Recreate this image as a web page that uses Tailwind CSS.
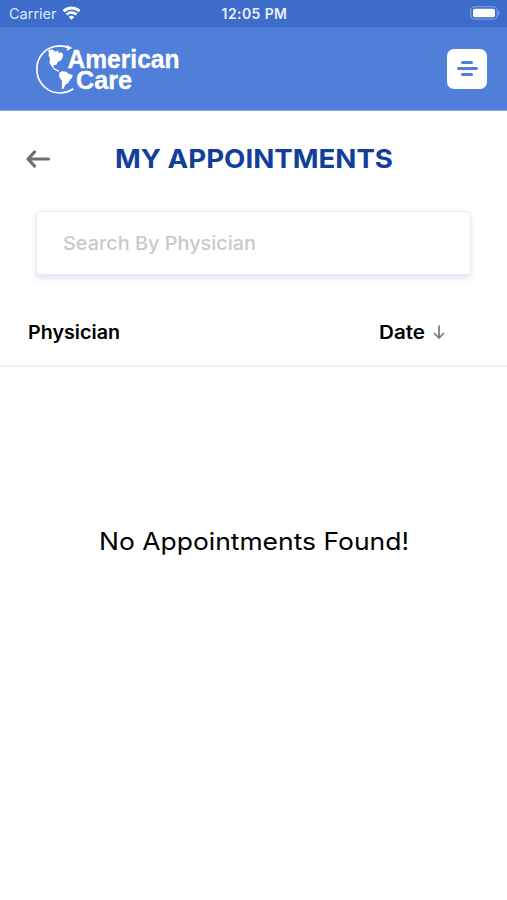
<!DOCTYPE html>
<html lang="en">
<head>
    <meta charset="UTF-8">
    <title>My Appointments</title>
    <script src="https://cdn.jsdelivr.net/npm/@tailwindcss/browser@4"></script>
</head>
<body class="bg-white font-['Inter',sans-serif] text-black">
    <div class="h-[900px] flex flex-col overflow-hidden">
        <!-- Status bar -->
        <div class="h-[27px] shrink-0 bg-[#3d6ccb] grid grid-cols-3 items-center pl-[9px] pr-[7px] text-white">
            <div class="flex items-center gap-[5px]">
                <span class="text-[14.5px] leading-[27px] text-[#dfe8fb]">Carrier</span>
                <svg class="w-[19px] h-[14px] -mt-[2px]" viewBox="0 0 18 14" fill="none" stroke="currentColor" stroke-width="2.8">
                    <path d="M1 5.2C5.5.9 12.500.9 17 5.200"></path>
                    <path d="M4 8.500c2.900-2.600 7.100-2.600 10 0"></path>
                    <path d="M9 13.800l-2.800-2.900c1.500-1.400 4.100-1.400 5.600 0z" fill="currentColor" stroke="none"></path>
                </svg>
            </div>
            <span class="text-center text-[14px] leading-[27px] font-semibold tracking-[0.4px] text-[#eaf0fd] whitespace-nowrap">12:05 PM</span>
            <svg class="justify-self-end w-[30px] h-[14px] -mt-[1px]" viewBox="0 0 30 14">
                <rect x=".75" y=".75" width="26.500" height="12.500" rx="4" fill="none" stroke="#7f9fe2" stroke-width="1.200"></rect>
                <rect x="3" y="2.700" width="22" height="8.600" rx="2" fill="#fff"></rect>
                <path d="M28.300 4.500c2 .8 2 4.200 0 5z" fill="#7f9fe2"></path>
            </svg>
        </div>

        <!-- Header -->
        <div class="h-[84px] shrink-0 bg-[#507fda] border-b border-[#86a8e8] flex items-center justify-between pl-[35px] pr-5">
            <svg class="w-[150px] h-[52px]" viewBox="0 0 150 52" fill="#fff">
                <path d="M33 4.600C29 2.600 24 2.400 19.500 3.500 9 6 1.800 15 1.800 26c0 14 11 24 23 24 5.500 0 9.500-1.400 13.500-4.200" fill="none" stroke="#fff" stroke-width="1.700"></path>
                <path d="M31.500 1.800l5.700 3.300-5.700 3 .9-3z"></path>
                <path d="M13 7.500l4-1.200 3.500 2.500 2.500-1.300.8 3 2-1.500 2.400 2.300-.6 2.700-1.600 3.500-3.300 1.300-1 2.700-3 .8-.2 2.500 2.500 1.200 3.300 1.700-1 1-4.300-2.200-2.200-3-2.300-3.500.5-4.500-1.500-3 .5-2z"></path>
                <path d="M24.300 29.800l2.700-1.600 4.500.5 2 2 4.200 1.300-.7 2.800-2 2.300-2 3-2.500 1.500-2.200 4.700-1.600-.8.3-7.500-3-4.500z"></path>
                <g class="font-['Liberation_Sans',sans-serif] font-bold" font-size="25.500" stroke="#fff" stroke-width=".3">
                    <text x="32.500" y="24.500" textLength="112" lengthAdjust="spacingAndGlyphs">American</text>
                    <text x="41" y="45.500" textLength="56" lengthAdjust="spacingAndGlyphs">Care</text>
                </g>
            </svg>
            <button class="w-10 h-10 rounded-[7px] bg-white flex flex-col items-center justify-center gap-[3px]" aria-label="Menu">
                <span class="w-3 h-[3px] rounded-full bg-[#507fda]"></span>
                <span class="w-[21px] h-[3px] rounded-full bg-[#507fda]"></span>
                <span class="w-3 h-[3px] rounded-full bg-[#507fda]"></span>
            </button>
        </div>

        <!-- Page title -->
        <div class="h-[96px] shrink-0 flex items-center px-[26px]">
            <svg class="w-[25px] h-[18px]" viewBox="0 0 25 18" fill="none" stroke="#6f6f6f" stroke-width="3.200" stroke-linecap="round" stroke-linejoin="round">
                <path d="M22.500 9H2.500M8.500 2L2 9l6.500 7"></path>
            </svg>
            <svg class="w-[280px] h-[36px] ml-[63px]" viewBox="0 0 280 36">
                <text x="1" y="27" font-size="26" textLength="278" lengthAdjust="spacingAndGlyphs" class="fill-[#123f9c] font-['Inter',sans-serif] font-bold">MY APPOINTMENTS</text>
            </svg>
        </div>

        <!-- Search -->
        <div class="mx-9 mt-[4px] h-[64px] shrink-0 rounded-[4px] bg-white border border-[#ececf0] shadow-[0_4px_6px_#e3e5f8] flex items-center pl-[25px]">
            <svg class="w-[196px] h-[28px]" viewBox="0 0 196 28">
                <text x="1" y="21" font-size="18.500" textLength="193" lengthAdjust="spacingAndGlyphs" class="fill-[#c9c9c9] font-['Inter',sans-serif] font-medium">Search By Physician</text>
            </svg>
        </div>

        <!-- Table head -->
        <div class="mt-[24px] h-[68px] shrink-0 border-b-2 border-[#f0f0f0] flex items-center justify-between pl-[27px] pr-[62px]">
            <svg class="w-[94px] h-[28px]" viewBox="0 0 94 28">
                <text x="1" y="21" font-size="18.500" textLength="92" lengthAdjust="spacingAndGlyphs" class="font-['Inter',sans-serif] font-semibold">Physician</text>
            </svg>
            <div class="flex items-center gap-[6px]">
                <svg class="w-[48px] h-[28px]" viewBox="0 0 48 28">
                    <text x="0" y="21" font-size="18.500" textLength="46" lengthAdjust="spacingAndGlyphs" class="font-['Inter',sans-serif] font-semibold">Date</text>
                </svg>
                <svg class="w-[12px] h-[14px]" viewBox="0 0 12 14" fill="none" stroke="#777" stroke-width="1.700" stroke-linecap="round" stroke-linejoin="round">
                    <path d="M6 1v12M1.500 8.500L6 13l4.500-4.500"></path>
                </svg>
            </div>
        </div>

        <!-- Empty state -->
        <div class="mt-[155px] flex justify-center">
            <svg class="w-[312px] h-[40px]" viewBox="0 0 312 40">
                <text x="1" y="28" font-size="24" textLength="310" lengthAdjust="spacingAndGlyphs" class="font-['Inter',sans-serif]">No Appointments Found!</text>
            </svg>
        </div>
    </div>
</body>
</html>
